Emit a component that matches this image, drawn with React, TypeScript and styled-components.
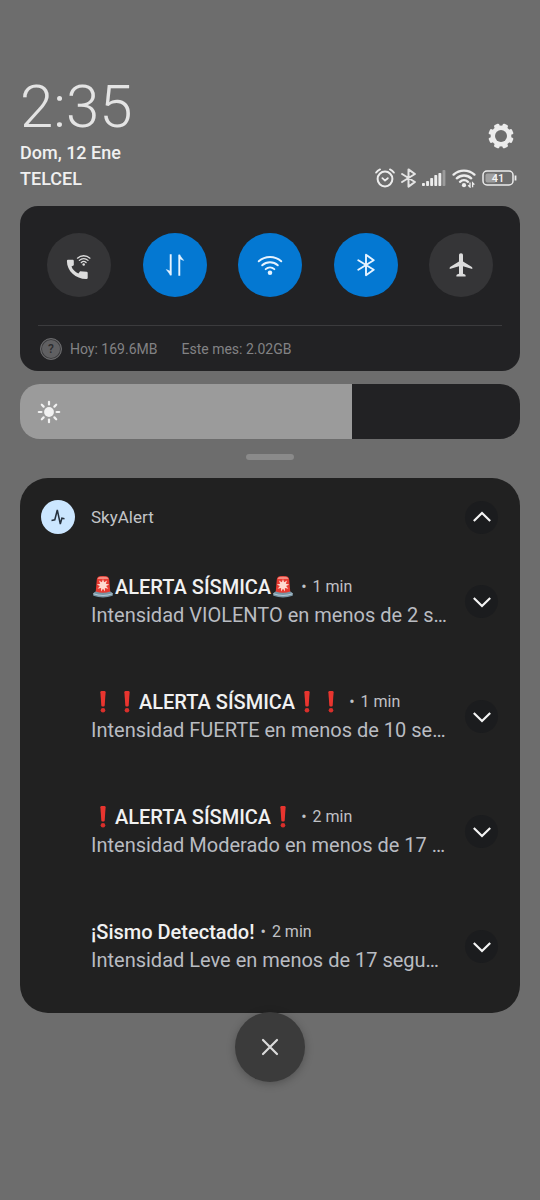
import React, { useState } from "react";
import styled, { createGlobalStyle } from "styled-components";

const GlobalStyle = createGlobalStyle`
  *, *::before, *::after { box-sizing: border-box; }
  html { background: #6d6d6d; }
  body {
    margin: 0;
    background: #6d6d6d;
    font-family: Roboto, "Liberation Sans", sans-serif;
    color: #e4e4e4;
  }
  button { font: inherit; color: inherit; border: 0; padding: 0; cursor: pointer; }
  h1, h2, h3, p { margin: 0; font-weight: inherit; }
  svg { display: block; flex: none; }
`;

const Shade = styled.main`
  display: flex;
  flex-direction: column;
  min-height: 100vh;
  padding: 74px 20px 0;
`;

const Header = styled.header`
  display: flex;
  justify-content: space-between;
`;

const HeaderStart = styled.div`
  display: flex;
  flex-direction: column;
`;

const HeaderEnd = styled.div`
  display: flex;
  flex-direction: column;
  align-items: flex-end;
  justify-content: space-between;
  padding-top: 48px;
`;

const Clock = styled.time`
  font-size: 60px;
  line-height: 66px;
  font-weight: 300;
`;

const HeaderLine = styled.p`
  font-size: 18px;
  line-height: 26px;
  font-weight: 500;
  color: #f0f0f0;
`;

const SettingsButton = styled.button`
  width: 28px;
  height: 28px;
  margin-right: 5px;
  background: none;
`;

const StatusIcons = styled.div`
  display: flex;
  align-items: center;
  height: 28px;
  gap: 6px;
  padding-right: 3px;
`;

const QuickCard = styled.section`
  margin-top: 14px;
  border-radius: 18px;
  background: #222224;
  padding: 27px 18px 0;
`;

const Tiles = styled.div`
  display: flex;
  justify-content: space-between;
  padding: 0 9px 28px;
`;

const Tile = styled.button<{ $on: boolean }>`
  display: grid;
  place-items: center;
  width: 64px;
  height: 64px;
  border-radius: 50%;
  color: ${(p) => (p.$on ? "#e6f3ff" : "#dcdcdc")};
  background: ${(p) => (p.$on ? "#0478d2" : "#353537")};
`;

const Usage = styled.div`
  display: flex;
  align-items: center;
  height: 46px;
  border-top: 1px solid #3b3b3d;
  padding-left: 2px;
  font-size: 14px;
  color: #828284;
`;

const UsageText = styled.span`
  margin-right: 24px;
`;

const HelpMark = styled.span`
  display: grid;
  place-items: center;
  width: 22px;
  height: 22px;
  margin-right: 8px;
  border-radius: 50%;
  border: 1px solid #6a6a6c;
  box-shadow: inset 0 0 0 1px #3c3c3e;
  background: #606062;
  color: #2b2b2d;
  font-size: 12px;
  font-weight: 500;
`;

const Brightness = styled.label`
  position: relative;
  display: block;
  margin-top: 13px;
`;

const BrightnessIcon = styled.span`
  position: absolute;
  left: 17px;
  top: 16px;
  pointer-events: none;
`;

const BrightnessRange = styled.input`
  display: block;
  appearance: none;
  width: 100%;
  height: 55px;
  margin: 0;
  border-radius: 20px;
  background: #222224;

  &::-webkit-slider-thumb {
    appearance: none;
    width: 1px;
    height: 55px;
    background: transparent;
  }
`;

const Handle = styled.div`
  align-self: center;
  width: 48px;
  height: 6px;
  margin: 15px 0 18px;
  border-radius: 3px;
  background: #8a8a8a;
`;

const Panel = styled.section`
  border-radius: 28px;
  background: #212121;
  padding: 22px 22px 9px 21px;
`;

const AppRow = styled.div`
  display: flex;
  align-items: center;
  height: 34px;
`;

const AppName = styled.h2`
  flex: 1;
  margin-left: 16px;
  font-size: 17px;
  color: #c3c5c8;
`;

const NoticeList = styled.ul`
  list-style: none;
  margin: 10px 0 0;
  padding: 0 0 0 50px;
`;

const Notice = styled.li`
  display: flex;
  align-items: center;
  height: 115px;
`;

const NoticeText = styled.div`
  flex: 1;
  min-width: 0;
  white-space: nowrap;
`;

const NoticeHead = styled.div`
  display: flex;
  align-items: center;
  height: 28px;
`;

const NoticeTitle = styled.h3`
  display: flex;
  align-items: center;
  font-size: 20px;
  line-height: 28px;
  font-weight: 500;
  color: #f1f1f1;
`;

const NoticeTime = styled.span`
  display: flex;
  gap: 6px;
  margin-left: 6px;
  font-size: 16px;
  line-height: 28px;
  color: #c0c2c6;
`;

const NoticeBody = styled.p`
  font-size: 20px;
  line-height: 29px;
  color: #b9bcc2;
`;

const RoundButton = styled.button`
  display: grid;
  place-items: center;
  flex: none;
  width: 33px;
  height: 33px;
  border-radius: 50%;
  background: #1b1c1e;
  color: #f4f4f4;
`;

const CloseButton = styled.button`
  display: grid;
  place-items: center;
  align-self: center;
  width: 70px;
  height: 70px;
  margin-top: -1px;
  border-radius: 50%;
  background: #3b3b3b;
  color: #dadada;
  box-shadow: 0 2px 8px rgba(0, 0, 0, 0.25);
`;

const GearIcon = () => (
  <svg width="28" height="28" viewBox="0 0 28 28" aria-hidden="true">
    <g fill="#ececec">
      {[22.5, 67.5, 112.5, 157.5].map((a) => (
        <rect key={a} x="11.2" y="1.4" width="5.6" height="25.2" rx="1.4" transform={`rotate(${a} 14 14)`} />
      ))}
    </g>
    <circle cx="14" cy="14" r="8.2" fill="none" stroke="#ececec" strokeWidth="4.4" />
    <circle cx="14" cy="14" r="6" fill="#6d6d6d" />
  </svg>
);

const AlarmIcon = () => (
  <svg width="20" height="20" viewBox="0 0 20 20" fill="none" stroke="#ececec" strokeLinecap="round" strokeLinejoin="round" aria-hidden="true">
    <circle cx="10" cy="11" r="7.4" strokeWidth="2" />
    <path d="M7.4 10.2 10 12.6l2.8-2.400" strokeWidth="1.8" />
    <path d="M1.2 4.6Q2.600 2.400 5 1.400M18.800 4.600Q17.400 2.400 15 1.400" strokeWidth="1.9" />
  </svg>
);

const BluetoothIcon = ({ size, width }: { size: number; width: number }) => (
  <svg width={size * 0.75} height={size} viewBox="0 0 18 24" fill="none" stroke="currentColor" strokeWidth={width} strokeLinejoin="round" strokeLinecap="round" aria-hidden="true">
    <path d="M1.300 7.200 16.700 16.800 9 22.300V1.700l7.700 5.500L1.300 16.800" />
  </svg>
);

const SignalIcon = () => (
  <svg width="24" height="18" viewBox="0 0 24 18" aria-hidden="true">
    {[3, 5, 8, 11, 13, 16].map((h, i) => (
      <rect key={h} x={i * 4.1} y={17 - h} width="2.9" height={h} rx="0.8" fill={i === 5 ? "#9b9b9b" : "#ececec"} />
    ))}
  </svg>
);

const WifiArcs = ({ width }: { width: number }) => (
  <>
    <g fill="none" stroke="currentColor" strokeWidth={width} strokeLinecap="round">
      <path d="M1.6 6.6a15.5 15.5 0 0 1 20.8 0" />
      <path d="M4.8 10.3a10.6 10.6 0 0 1 14.4 0" />
      <path d="M8 13.8a6 6 0 0 1 8 0" />
    </g>
    <circle cx="12" cy="17.2" r="2.100" fill="currentColor" />
  </>
);

const StatusWifiIcon = () => (
  <svg width="24" height="20" viewBox="0 0 24 20" color="#ececec" aria-hidden="true">
    <WifiArcs width={2.4} />
    <path d="M18 14.600v4.400l-1.800-1.800M20.600 19.200v-4.400l1.800 1.800" fill="none" stroke="currentColor" strokeWidth="1.300" />
  </svg>
);

const BatteryIcon = () => (
  <svg width="35" height="16" viewBox="0 0 35 16" role="img" aria-label="41%">
    <rect x="1" y="1" width="30" height="14" rx="4" fill="none" stroke="#ececec" strokeWidth="1.5" />
    <rect x="3.5" y="3.5" width="11" height="9" rx="2" fill="#a0a0a0" />
    <path d="M33.5 5.5v5" stroke="#ececec" strokeWidth="1.8" />
    <text x="16" y="12" textAnchor="middle" fontSize="11" fontWeight="500" fill="#f4f4f4">41</text>
  </svg>
);

const WifiCallIcon = () => (
  <svg width="26" height="32" viewBox="0 0 26 32" aria-hidden="true">
    <path fill="currentColor" d="M2 10.800h4.700q1.100 0 1.100 1.100v4.300l-2.300 1.300c1 3 3.700 5.700 6.900 6.900l1.700-2.200 6.500.6q1.100.1 1.100 1.200v4.800q0 1.200-1.200 1.200C10 30.200.9 22.300.9 12q0-1.200 1.100-1.200z" />
    <g transform="translate(10.500 5.200) scale(0.600)">
      <WifiArcs width={2.2} />
    </g>
  </svg>
);

const DataIcon = () => (
  <svg width="20" height="24" viewBox="0 0 20 24" fill="currentColor" stroke="currentColor" aria-hidden="true">
    <path d="M5.700 1.300v21M14.300 22.700v-21" strokeWidth="1.900" fill="none" />
    <path d="M5.700 22.300 1.400 16.600l4.300 1.900zM14.300 1.700l4.300 5.700-4.300-1.900z" strokeWidth="0.600" strokeLinejoin="round" />
  </svg>
);

const WifiIcon = () => (
  <svg width="26" height="22" viewBox="0 0 24 20" aria-hidden="true">
    <WifiArcs width={1.8} />
  </svg>
);

const PlaneIcon = () => (
  <svg width="24" height="24" viewBox="0 0 24 24" fill="currentColor" aria-hidden="true">
    <path d="M12 .3c1.300 0 2 .9 2 2.200v5.900l8.500 5.300c.6.400.8.8.8 1.400v.8L14 13.300v7.400l2 .9c.4.200.6.500.6.900v1.100H7.400v-1.100c0-.4.200-.7.600-.9l2-.9v-7.400L.7 15.900v-.8c0-.6.2-1 .8-1.400L10 8.400V2.500C10 1.200 10.700.3 12 .3z" />
  </svg>
);

const SunIcon = () => (
  <svg width="24" height="24" viewBox="0 0 24 24" aria-hidden="true">
    <circle cx="12" cy="12" r="4.9" fill="#f1f1f1" />
    <g stroke="#f1f1f1" strokeWidth="2.200" strokeLinecap="round">
      {[0, 45, 90, 135, 180, 225, 270, 315].map((a) => (
        <path key={a} d="M12 1.800v2.600" transform={`rotate(${a} 12 12)`} />
      ))}
    </g>
  </svg>
);

const SkyAlertLogo = () => (
  <svg width="34" height="34" viewBox="0 0 34 34" aria-hidden="true">
    <circle cx="17" cy="17" r="17" fill="#cbe6ff" />
    <path d="M10.500 20.400l3.300-.6L16.300 10l3 14 1.600-5.800 2.600.5" fill="none" stroke="#25303d" strokeWidth="1.500" strokeLinejoin="miter" />
  </svg>
);

const Chevron = ({ up = false }: { up?: boolean }) => (
  <svg width="20" height="12" viewBox="0 0 20 12" fill="none" stroke="currentColor" strokeWidth="2.200" aria-hidden="true">
    <path d={up ? "M1.800 10 10 2l8.200 8" : "M1.800 2 10 10l8.200-8"} />
  </svg>
);

const CrossIcon = () => (
  <svg width="18" height="18" viewBox="0 0 18 18" stroke="currentColor" strokeWidth="2.200" strokeLinecap="round" aria-hidden="true">
    <path d="M2 2l14 14M16 2 2 16" />
  </svg>
);

const SirenEmoji = () => (
  <svg width="24" height="24" viewBox="0 0 24 24" aria-hidden="true">
    <path d="M4.600 18 5.800 4.500Q6.200 1.600 9 1.300q3-.4 6 0 2.800.3 3.200 3.200L19.400 18z" fill="#e8392f" />
    <path d="M6.500 4Q7 2 9 1.800q3-.3 6 0 2 .2 2.500 2.200z" fill="#f48a80" />
    <path d="M12 4l1.100 3.300 3-1.800-1.300 3.200 3.400.8-3.100 1.500 2.300 2.700-3.500-.6.100 3.400-2-2.700-2 2.700.1-3.400-3.500.6L8.900 11 5.800 9.500l3.400-.8-1.300-3.200 3 1.800z" fill="#ffd9cf" />
    <path d="M2.300 18.500Q3 17 4.800 16.600q7.200 2.400 14.400 0 1.800.4 2.500 1.900v2.300Q12 24.200 2.300 20.800z" fill="#7894a3" />
    <path d="M2.300 18.300q9.700 3.200 19.400 0v1q-9.700 3.200-19.400 0z" fill="#b4cad6" />
  </svg>
);

const ExclamationEmoji = () => (
  <svg width="24" height="24" viewBox="0 0 24 24" aria-hidden="true">
    <path d="M9.400 2.200Q9.400 1 10.600 1h2.800q1.200 0 1.200 1.200l-.9 13.200q-.1 1-1 1h-1.400q-.9 0-1-1z" fill="#e8352f" />
    <circle cx="12" cy="20.200" r="2.300" fill="#d92f2b" />
  </svg>
);

type Mark = "siren" | "exclamation";

const Marks = ({ kind, count }: { kind?: Mark; count: number }) => (
  <>
    {kind &&
      Array.from({ length: count }, (_, i) =>
        kind === "siren" ? <SirenEmoji key={i} /> : <ExclamationEmoji key={i} />
      )}
  </>
);

const notices: { title: string; mark?: Mark; count: number; time: string; body: string }[] = [
  { title: "ALERTA SÍSMICA", mark: "siren", count: 1, time: "1 min", body: "Intensidad VIOLENTO en menos de 2 s…" },
  { title: "ALERTA SÍSMICA", mark: "exclamation", count: 2, time: "1 min", body: "Intensidad FUERTE en menos de 10 se…" },
  { title: "ALERTA SÍSMICA", mark: "exclamation", count: 1, time: "2 min", body: "Intensidad Moderado en menos de 17 …" },
  { title: "¡Sismo Detectado!", count: 0, time: "2 min", body: "Intensidad Leve en menos de 17 segu…" },
];

const tiles = [
  { label: "Llamadas por Wi-Fi", on: false, icon: <WifiCallIcon /> },
  { label: "Datos móviles", on: true, icon: <DataIcon /> },
  { label: "Wi-Fi", on: true, icon: <WifiIcon /> },
  { label: "Bluetooth", on: true, icon: <BluetoothIcon size={24} width={1.9} /> },
  { label: "Modo avión", on: false, icon: <PlaneIcon /> },
];

export default function App() {
  const [brightness, setBrightness] = useState(66.4);
  return (
    <>
      <GlobalStyle />
      <Shade>
        <Header>
          <HeaderStart>
            <Clock>2:35</Clock>
            <HeaderLine>Dom, 12 Ene</HeaderLine>
            <HeaderLine>TELCEL</HeaderLine>
          </HeaderStart>
          <HeaderEnd>
            <SettingsButton aria-label="Ajustes">
              <GearIcon />
            </SettingsButton>
            <StatusIcons>
              <AlarmIcon />
              <BluetoothIcon size={20} width={2.400} />
              <SignalIcon />
              <StatusWifiIcon />
              <BatteryIcon />
            </StatusIcons>
          </HeaderEnd>
        </Header>

        <QuickCard>
          <Tiles>
            {tiles.map((t) => (
              <Tile key={t.label} $on={t.on} aria-label={t.label} aria-pressed={t.on}>
                {t.icon}
              </Tile>
            ))}
          </Tiles>
          <Usage>
            <HelpMark>?</HelpMark>
            <UsageText>Hoy: 169.6MB</UsageText>
            <UsageText>Este mes: 2.02GB</UsageText>
          </Usage>
        </QuickCard>

        <Brightness>
          <BrightnessRange
            type="range"
            aria-label="Brillo"
            min={0}
            max={100}
            step={0.1}
            value={brightness}
            onChange={(e) => setBrightness(Number(e.target.value))}
            style={{
              background: `linear-gradient(to right, #9b9b9b ${brightness}%, #222224 ${brightness}%)`,
            }}
          />
          <BrightnessIcon>
            <SunIcon />
          </BrightnessIcon>
        </Brightness>

        <Handle />

        <Panel>
          <AppRow>
            <SkyAlertLogo />
            <AppName>SkyAlert</AppName>
            <RoundButton aria-label="Contraer">
              <Chevron up />
            </RoundButton>
          </AppRow>
          <NoticeList>
            {notices.map((n) => (
              <Notice key={n.body}>
                <NoticeText>
                  <NoticeHead>
                    <NoticeTitle>
                      <Marks kind={n.mark} count={n.count} />
                      {n.title}
                      <Marks kind={n.mark} count={n.count} />
                    </NoticeTitle>
                    <NoticeTime>
                      <span>•</span>
                      <span>{n.time}</span>
                    </NoticeTime>
                  </NoticeHead>
                  <NoticeBody>{n.body}</NoticeBody>
                </NoticeText>
                <RoundButton aria-label="Expandir">
                  <Chevron />
                </RoundButton>
              </Notice>
            ))}
          </NoticeList>
        </Panel>

        <CloseButton aria-label="Borrar notificaciones">
          <CrossIcon />
        </CloseButton>
      </Shade>
    </>
  );
}
